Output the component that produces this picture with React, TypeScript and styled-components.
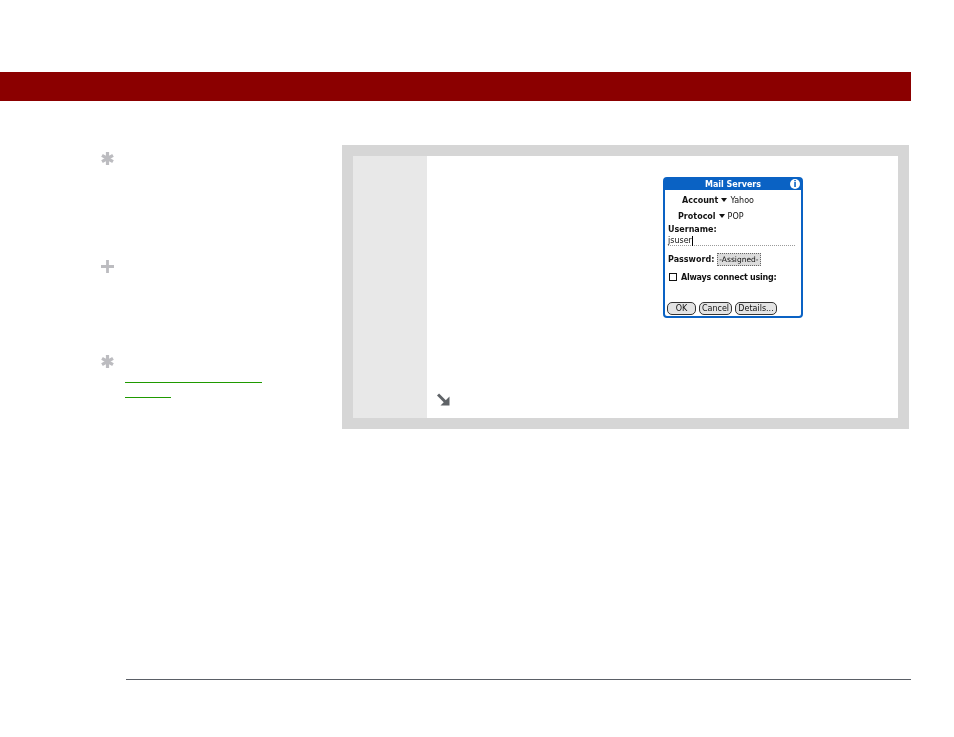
import React, { FC } from 'react'
import styled, { createGlobalStyle } from 'styled-components'

const GlobalStyle = createGlobalStyle`
  html, body {
    margin: 0;
    padding: 0;
    background-color: #ffffff;
    font-family: 'Liberation Sans', Arial, sans-serif;
  }
`

const Page = styled.div`
  display: flex;
  flex-flow: column;
  width: 954px;
  height: 737px;
  overflow: hidden;
  padding-top: 72px;
  box-sizing: border-box;
`

const Banner = styled.div`
  width: 911px;
  height: 29px;
  background-color: #8b0000;
`

const Content = styled.div`
  display: flex;
  margin-top: 44px;
  height: 284px;
`

const Sidebar = styled.div`
  display: flex;
  flex-flow: column;
  width: 342px;
  padding-left: 101px;
  box-sizing: border-box;
`

const TipRow = styled.div<{ $height: number }>`
  display: flex;
  gap: 11px;
  height: ${(p) => p.$height}px;
`

const TipIcon = styled.svg`
  flex: none;
  width: 13px;
  height: 13px;
  margin-top: 7px;
`

const LinkLine = styled.a<{ $width: number }>`
  display: block;
  width: ${(p) => p.$width}px;
  height: 14px;
  border-bottom: 1px solid #1f9a00;
`

const LinkBlock = styled.div`
  padding-top: 20px;
`

const Panel = styled.div`
  display: flex;
  width: 567px;
  height: 284px;
  padding: 11px;
  box-sizing: border-box;
  background-color: #d6d6d6;
`

const StepColumn = styled.div`
  flex: none;
  width: 74px;
  background-color: #e8e8e8;
`

const StepBody = styled.div`
  display: flex;
  flex-flow: column;
  flex: 1;
  padding-top: 21px;
  padding-left: 10px;
  background-color: #ffffff;
`

const ScreenSlot = styled.div`
  display: flex;
  height: 216px;
  padding-left: 226px;
`

const Device = styled.div`
  display: flex;
  flex-flow: column;
  width: 140px;
  height: 141px;
  box-sizing: border-box;
  border: 2px solid #0a62c4;
  border-radius: 4px;
  background-color: #ffffff;
  color: #111111;
  font-family: 'DejaVu Sans', sans-serif;
  font-size: 8px;
  filter: blur(0.35px);
`

const TitleBar = styled.div`
  position: relative;
  display: flex;
  justify-content: center;
  align-items: center;
  flex: none;
  height: 11px;
  background-color: #0a62c4;
  color: #ffffff;
  font-weight: bold;
  font-size: 8px;
`

const InfoBadge = styled.span`
  position: absolute;
  top: 0;
  right: 1px;
  width: 10px;
  height: 10px;
  border-radius: 50%;
  background-color: #ffffff;
  color: #0a62c4;
  font-size: 9px;
  font-weight: bold;
  line-height: 10px;
  text-align: center;
`

const FormRow = styled.div<{ $indent: number; $top: number }>`
  display: flex;
  align-items: center;
  gap: 3px;
  height: 12px;
  margin-top: ${(p) => p.$top}px;
  padding-left: ${(p) => p.$indent}px;
  white-space: nowrap;
`

const Strong = styled.span<{ $tight?: boolean }>`
  font-weight: bold;
  letter-spacing: ${(p) => (p.$tight ? '-0.24px' : '0')};
`

const Caret = styled.span`
  width: 0;
  height: 0;
  border-left: 3px solid transparent;
  border-right: 3px solid transparent;
  border-top: 4px solid #111111;
`

const Field = styled.div`
  display: flex;
  align-items: center;
  height: 9px;
  margin: 1px 6px 0 3px;
  border-bottom: 1px dotted #9a9a9a;
`

const Cursor = styled.span`
  width: 1px;
  height: 10px;
  background-color: #000000;
`

const Assigned = styled.span`
  padding: 0 1px;
  border: 1px dotted #666666;
  background-color: #dcdcdc;
  font-size: 7.5px;
  line-height: 11px;
`

const Check = styled.span`
  width: 6px;
  height: 6px;
  margin-right: 1px;
  border: 1px solid #111111;
`

const ButtonRow = styled.div`
  display: flex;
  gap: 3px;
  margin-top: auto;
  margin-bottom: 1px;
  padding-left: 2px;
`

const DeviceButton = styled.span<{ $width: number }>`
  width: ${(p) => p.$width}px;
  height: 11px;
  border: 1px solid #333333;
  border-radius: 5px;
  background-color: #e4e4e4;
  line-height: 11px;
  text-align: center;
`

const ArrowIcon = styled.svg`
  display: block;
  width: 13px;
  height: 13px;
`

const Footer = styled.div`
  width: 785px;
  height: 1px;
  margin-top: 250px;
  margin-left: 126px;
  background-color: #5a5f66;
`

const Asterisk: FC = () => (
  <TipIcon viewBox="0 0 13 13">
    <path d="M6.5 0v13M1 3.3l11 6.4M12 3.3L1 9.7" stroke="#bcbcc0" strokeWidth="3.2" fill="none" />
  </TipIcon>
)

const Plus: FC = () => (
  <TipIcon viewBox="0 0 13 13">
    <path d="M6.5 0v13M0 6.5h13" stroke="#bcbcc0" strokeWidth="2.8" fill="none" />
  </TipIcon>
)

export default function App() {
  return (
    <Page>
      <GlobalStyle />
      <Banner />
      <Content>
        <Sidebar>
          <TipRow $height={108}>
            <Asterisk />
          </TipRow>
          <TipRow $height={95}>
            <Plus />
          </TipRow>
          <TipRow $height={60}>
            <Asterisk />
            <LinkBlock>
              <LinkLine $width={137} />
              <LinkLine $width={46} />
            </LinkBlock>
          </TipRow>
        </Sidebar>
        <Panel>
          <StepColumn />
          <StepBody>
            <ScreenSlot>
              <Device>
                <TitleBar>
                  Mail Servers
                  <InfoBadge>i</InfoBadge>
                </TitleBar>
                <FormRow $indent={17} $top={4}>
                  <Strong>Account</Strong>
                  <Caret />
                  <span>Yahoo</span>
                </FormRow>
                <FormRow $indent={13} $top={4}>
                  <Strong>Protocol</Strong>
                  <Caret />
                  <span>POP</span>
                </FormRow>
                <FormRow $indent={3} $top={1}>
                  <Strong>Username:</Strong>
                </FormRow>
                <Field>
                  jsuser
                  <Cursor />
                </Field>
                <FormRow $indent={3} $top={7}>
                  <Strong>Password:</Strong>
                  <Assigned>-Assigned-</Assigned>
                </FormRow>
                <FormRow $indent={4} $top={6}>
                  <Check />
                  <Strong $tight>Always connect using:</Strong>
                </FormRow>
                <ButtonRow>
                  <DeviceButton $width={27}>OK</DeviceButton>
                  <DeviceButton $width={31}>Cancel</DeviceButton>
                  <DeviceButton $width={40}>Details...</DeviceButton>
                </ButtonRow>
              </Device>
            </ScreenSlot>
            <ArrowIcon viewBox="0 0 13 13">
              <path d="M1 1.5l8 8" stroke="#5f6367" strokeWidth="3" fill="none" />
              <path d="M12.5 3.5v9H3.5z" fill="#5f6367" />
            </ArrowIcon>
          </StepBody>
        </Panel>
      </Content>
      <Footer />
    </Page>
  )
}
